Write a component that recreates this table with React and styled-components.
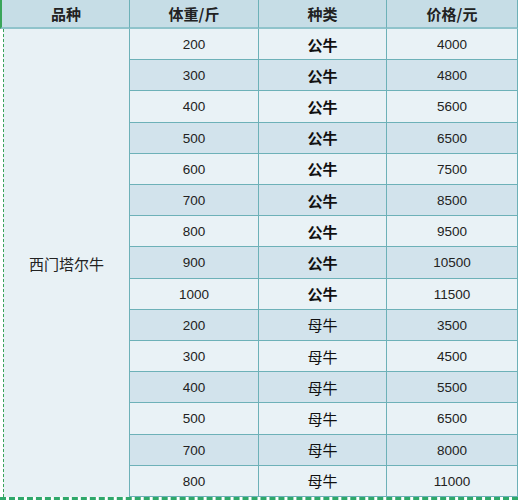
import styled, { createGlobalStyle } from "styled-components";

const GlobalStyle = createGlobalStyle`
  body {
    margin: 0;
    background: #ffffff;
    font-family: "Liberation Sans", "Noto Sans CJK SC", sans-serif;
  }
`;

const Sheet = styled.div`
  width: 518px;
  height: 500px;
  display: grid;
  grid-template-columns: 130px 129px 128px 1fr;
  grid-template-rows: 29px repeat(15, 1fr) 3px;
  background: #ffffff;
  overflow: hidden;
`;

const Head = styled.div`
  display: flex;
  align-items: center;
  justify-content: center;
  background: #c6dde6;
  border-right: 1px solid #6db1b8;
  border-bottom: 2px solid #8fc3cb;
  border-left: ${(p) => (p.$first ? "2px solid #3aa55a" : "none")};
  padding-left: ${(p) => (p.$first ? "1px" : "0")};
  font-family: "Noto Sans CJK SC", sans-serif;
  font-weight: bold;
  font-size: 15px;
  color: #222;
`;

const Breed = styled.div`
  grid-row: 2 / span 15;
  display: flex;
  align-items: center;
  justify-content: center;
  margin-left: 3px;
  background: #e8f1f5;
  border-left: 1px dashed #3aa55a;
  border-right: 1px solid #6db1b8;
  font-family: "Noto Sans CJK SC", sans-serif;
  font-size: 15px;
  color: #222;
`;

const Cell = styled.div`
  display: flex;
  align-items: center;
  justify-content: center;
  background: ${(p) => (p.$alt ? "#d2e3ec" : "#e9f2f6")};
  border-right: 1px solid #6db1b8;
  border-bottom: 1px solid #6db1b8;
  font-size: 13.5px;
  color: #222;
  padding-top: 1px;
`;

const Kind = styled(Cell)`
  font-family: "Noto Sans CJK SC", sans-serif;
  font-size: 15px;
  font-weight: ${(p) => (p.$bold ? "bold" : "normal")};
  color: #111;
  padding-top: 0;
`;

const BottomEdge = styled.div`
  grid-column: 1 / -1;
  border-top: 3px dashed #2fa86a;
`;

const rows = [
  [200, "公牛", 4000],
  [300, "公牛", 4800],
  [400, "公牛", 5600],
  [500, "公牛", 6500],
  [600, "公牛", 7500],
  [700, "公牛", 8500],
  [800, "公牛", 9500],
  [900, "公牛", 10500],
  [1000, "公牛", 11500],
  [200, "母牛", 3500],
  [300, "母牛", 4500],
  [400, "母牛", 5500],
  [500, "母牛", 6500],
  [700, "母牛", 8000],
  [800, "母牛", 11000],
];

export default function App() {
  return (
    <>
      <GlobalStyle />
      <Sheet>
        <Head $first>品种</Head>
        <Head>体重/斤</Head>
        <Head>种类</Head>
        <Head>价格/元</Head>
        <Breed>西门塔尔牛</Breed>
        {rows.map(([weight, kind, price], i) => {
          const alt = i % 2 === 1;
          return [
            <Cell key={`w${i}`} $alt={alt} style={{ gridColumn: 2 }}>
              {weight}
            </Cell>,
            <Kind key={`k${i}`} $alt={alt} $bold={kind === "公牛"}>
              {kind}
            </Kind>,
            <Cell key={`p${i}`} $alt={alt}>
              {price}
            </Cell>,
          ];
        })}
        <BottomEdge />
      </Sheet>
    </>
  );
}
